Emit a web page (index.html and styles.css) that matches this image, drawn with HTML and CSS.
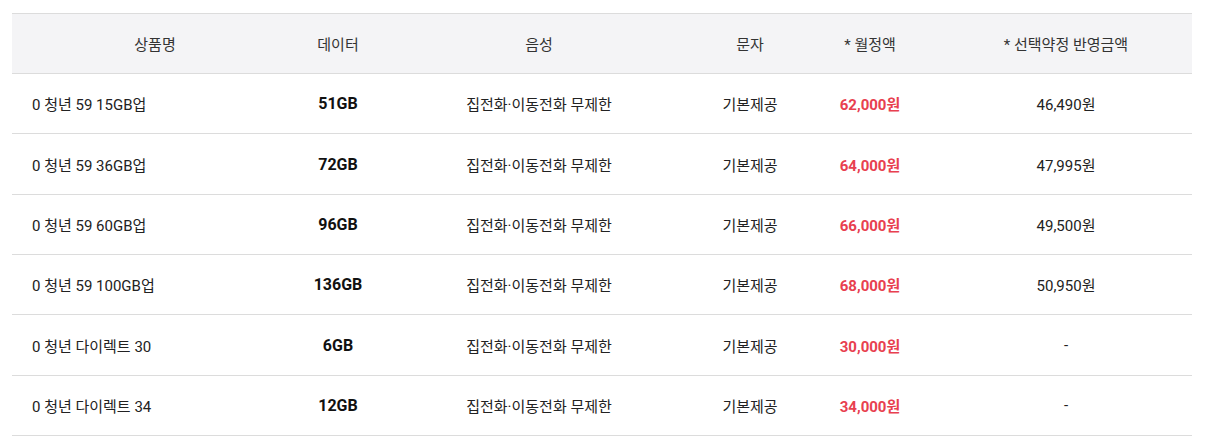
FILE: index.html
```html
<!DOCTYPE html>
<html lang="ko">
<head>
  <meta charset="UTF-8">
  <title>요금제 비교</title>
  <link rel="stylesheet" href="styles.css">
</head>
<body>
  <div class="plan-wrap">
    <table class="plan-table">
      <colgroup>
        <col class="c-name">
        <col class="c-data">
        <col class="c-voice">
        <col class="c-sms">
        <col class="c-price">
        <col class="c-disc">
      </colgroup>
      <thead>
        <tr>
          <th>상품명</th>
          <th>데이터</th>
          <th>음성</th>
          <th>문자</th>
          <th>* 월정액</th>
          <th>* 선택약정 반영금액</th>
        </tr>
      </thead>
      <tbody>
        <tr>
          <td class="name">0 청년 59 15GB업</td>
          <td class="data">51GB</td>
          <td>집전화·이동전화 무제한</td>
          <td>기본제공</td>
          <td class="price">62,000원</td>
          <td>46,490원</td>
        </tr>
        <tr>
          <td class="name">0 청년 59 36GB업</td>
          <td class="data">72GB</td>
          <td>집전화·이동전화 무제한</td>
          <td>기본제공</td>
          <td class="price">64,000원</td>
          <td>47,995원</td>
        </tr>
        <tr>
          <td class="name">0 청년 59 60GB업</td>
          <td class="data">96GB</td>
          <td>집전화·이동전화 무제한</td>
          <td>기본제공</td>
          <td class="price">66,000원</td>
          <td>49,500원</td>
        </tr>
        <tr>
          <td class="name">0 청년 59 100GB업</td>
          <td class="data">136GB</td>
          <td>집전화·이동전화 무제한</td>
          <td>기본제공</td>
          <td class="price">68,000원</td>
          <td>50,950원</td>
        </tr>
        <tr>
          <td class="name">0 청년 다이렉트 30</td>
          <td class="data">6GB</td>
          <td>집전화·이동전화 무제한</td>
          <td>기본제공</td>
          <td class="price">30,000원</td>
          <td>-</td>
        </tr>
        <tr>
          <td class="name">0 청년 다이렉트 34</td>
          <td class="data">12GB</td>
          <td>집전화·이동전화 무제한</td>
          <td>기본제공</td>
          <td class="price">34,000원</td>
          <td>-</td>
        </tr>
      </tbody>
    </table>
  </div>
</body>
</html>
```

FILE: styles.css
```css
body {
  margin: 0;
  background: #fff;
  font-family: Roboto, "Noto Sans CJK KR", sans-serif;
  color: #222;
}
.plan-wrap {
  padding: 13px 22px 0 12px;
}
.plan-table {
  width: 100%;
  border-collapse: collapse;
  table-layout: fixed;
  font-size: 15px;
}
.c-name { width: 286px; }
.c-data { width: 80px; }
.c-voice { width: 322px; }
.c-sms { width: 100px; }
.c-price { width: 140px; }
.plan-table th {
  height: 59px;
  padding: 0;
  background: #f4f4f6;
  font-weight: normal;
  color: #333;
  border-top: 1px solid #dcdcdc;
  border-bottom: 1px solid #dcdcdc;
  text-align: center;
}
.plan-table td {
  height: 59.35px;
  padding: 0;
  text-align: center;
  border-bottom: 1px solid #dcdcdc;
  color: #222;
}
.plan-table td.name {
  text-align: left;
  padding-left: 20px;
}
.plan-table td.data {
  font-size: 16px;
  font-weight: bold;
  color: #111;
}
.plan-table td.price {
  font-weight: bold;
  color: #e8404f;
}
```
